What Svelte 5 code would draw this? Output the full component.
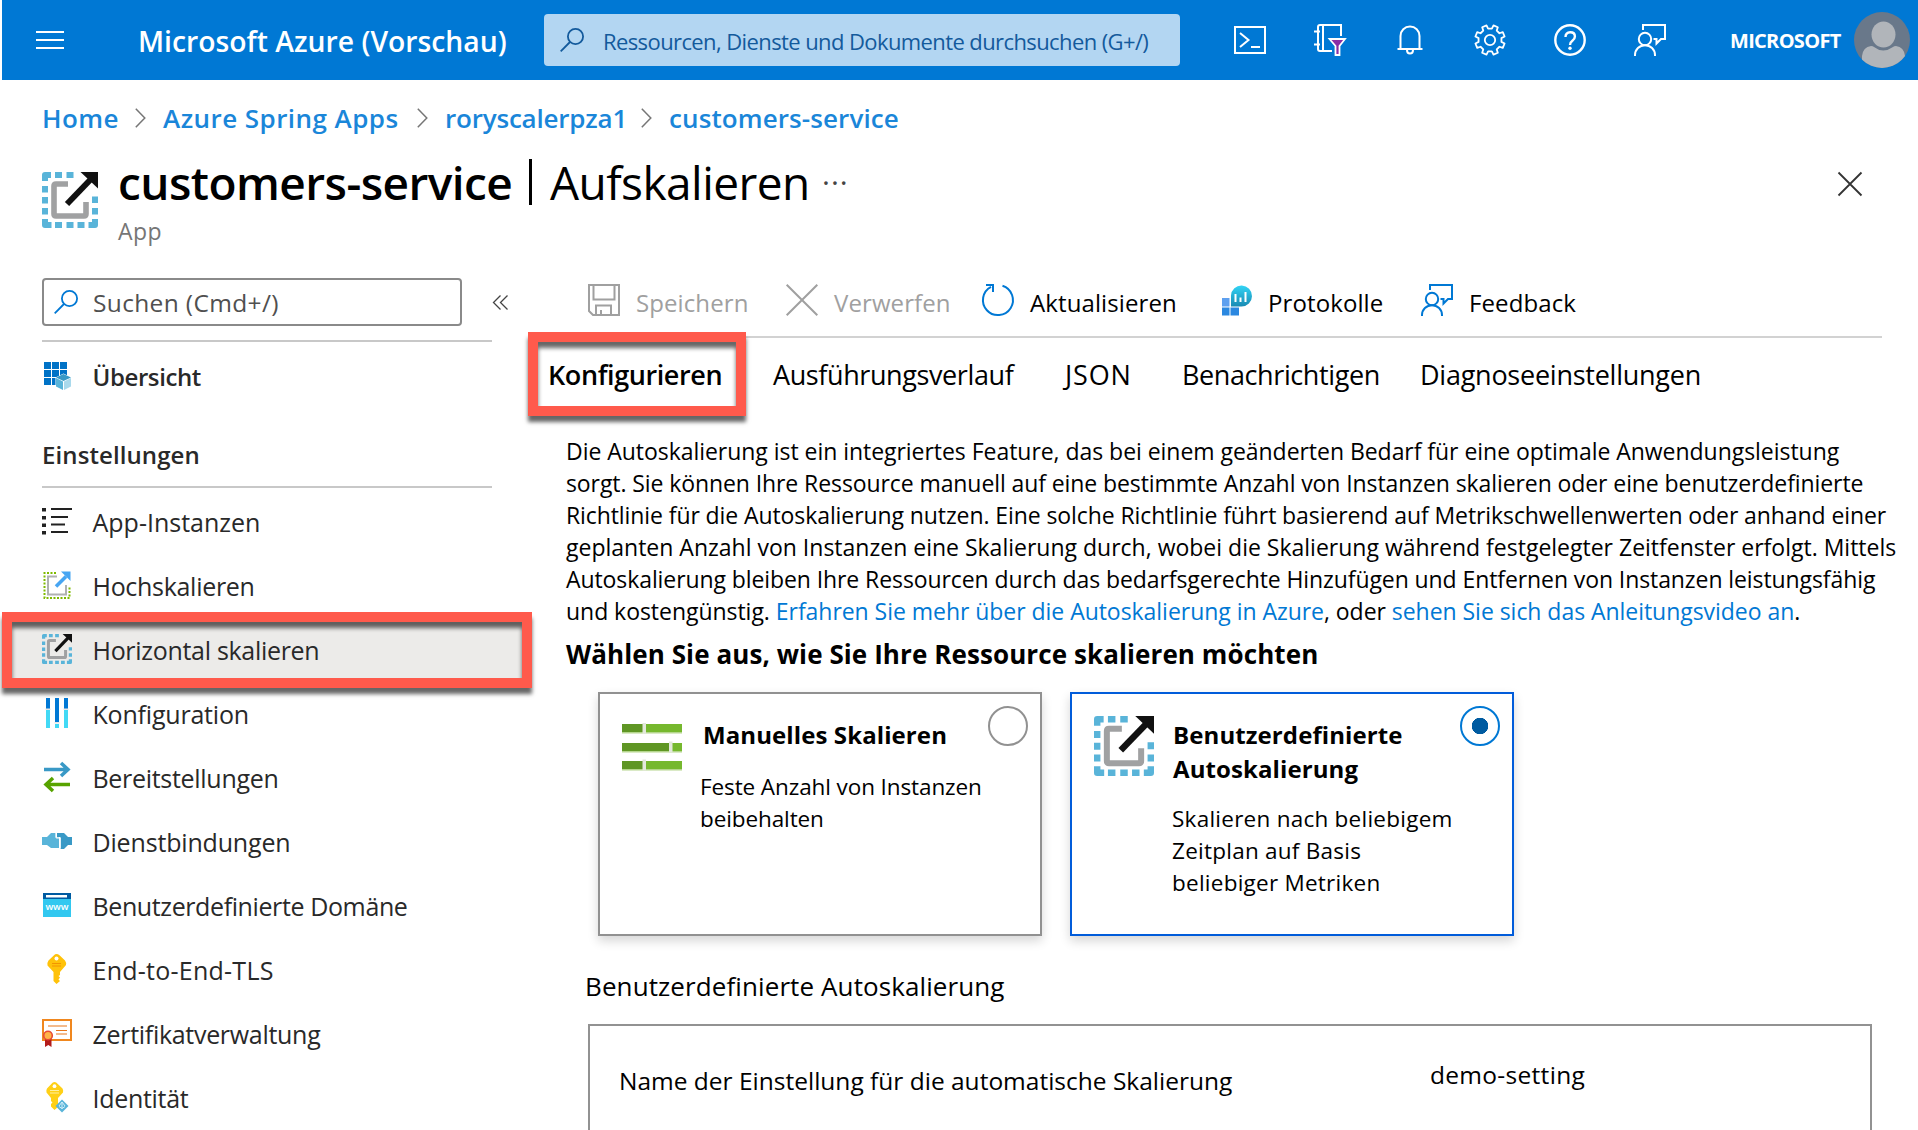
<script lang="ts">
    type NavItem = {
        icon: string;
        label: string;
        spacing?: number;
    };

    const navItems: NavItem[] = [
        { icon: "instances", label: "App-Instanzen", spacing: 0 },
        { icon: "scaleup", label: "Hochskalieren" },
        { icon: "scaleout", label: "Horizontal skalieren" },
        { icon: "config", label: "Konfiguration", spacing: -0.2 },
        { icon: "deploy", label: "Bereitstellungen" },
        { icon: "binding", label: "Dienstbindungen", spacing: -0.17 },
        { icon: "domain", label: "Benutzerdefinierte Domäne", spacing: -0.39 },
        { icon: "key", label: "End-to-End-TLS", spacing: 0.25 },
        { icon: "cert", label: "Zertifikatverwaltung" },
        { icon: "identity", label: "Identität" },
    ];

    const crumbs = [
        { label: "Home", spacing: 0.4 },
        { label: "Azure Spring Apps", spacing: 0.45 },
        { label: "roryscalerpza1", spacing: -0.2 },
        { label: "customers-service", spacing: 0.1 },
    ];

    const commands = [
        { icon: "save", label: "Speichern", disabled: true },
        { icon: "discard", label: "Verwerfen", disabled: true },
        { icon: "refresh", label: "Aktualisieren", disabled: false },
        { icon: "logs", label: "Protokolle", disabled: false },
        { icon: "feedback", label: "Feedback", disabled: false },
    ];

    const tabs = ["Konfigurieren", "Ausführungsverlauf", "JSON", "Benachrichtigen", "Diagnoseeinstellungen"];

    const topIcons = ["shell", "filter", "bell", "gear", "help", "feedback"];

    let selected = $state("scaleout");
    let activeTab = $state("Konfigurieren");
    let mode = $state("custom");

    function gearPath() {
        const pts: string[] = [];
        for (let k = 0; k < 8; k++) {
            const mid = 22.5 + 45 * k;
            for (const [da, r] of [[-13, 11.6], [-9, 15], [9, 15], [13, 11.6]]) {
                const a = ((mid + da) * Math.PI) / 180;
                pts.push(`${(16 + r * Math.cos(a)).toFixed(2)} ${(16 + r * Math.sin(a)).toFixed(2)}`);
            }
        }
        return `M${pts.join("L")}Z`;
    }
</script>

{#snippet icon(name: string)}
    {#if name === "shell"}
        <svg width="32" height="32" viewBox="0 0 32 32" fill="none" stroke="currentColor" stroke-width="2">
            <path d="M1 3h30v26H1zM6 9l8.500 7L6 23M17 23h9" />
        </svg>
    {:else if name === "filter"}
        <svg width="32" height="32" viewBox="0 0 32 32" fill="none" stroke="currentColor" stroke-width="2">
            <path d="M18 27H6q-2 0-2-2V3q0-2 2-2h21v11M9 1v26M0 7.500h6M0 20.500h6" />
            <path d="M15.500 15h15.500l-5.500 7v9h-4v-9z" fill="#8a2da5" stroke-width="1.800" />
        </svg>
    {:else if name === "bell"}
        <svg width="32" height="32" viewBox="0 0 32 32" fill="none" stroke="currentColor" stroke-width="2">
            <path d="M6.500 24V12a9.500 9.500 0 0 1 19 0v12M3.500 25h25M13 26q0 3.500 3 3.500t3-3.500" />
        </svg>
    {:else if name === "gear"}
        <svg width="32" height="32" viewBox="0 0 32 32" fill="none" stroke="currentColor" stroke-width="1.800">
            <path d={gearPath()} stroke-linejoin="round" />
            <circle cx="16" cy="16" r="5.200" />
        </svg>
    {:else if name === "help"}
        <svg width="32" height="32" viewBox="0 0 32 32" fill="none" stroke="currentColor" stroke-width="2.400">
            <circle cx="16" cy="16" r="14.700" />
            <path d="M11.500 13q0-4.700 4.700-4.700t4.700 4.200q0 2.500-2.500 4.300t-2.400 4.200" />
            <circle cx="16" cy="24.300" r="1.700" fill="currentColor" stroke="none" />
        </svg>
    {:else if name === "feedback"}
        <svg width="32" height="32" viewBox="0 0 32 32" fill="none" stroke="currentColor" stroke-width="2">
            <path d="M9 6V1h22v14h-4l-4.500 4.500V15h-3" />
            <circle cx="11" cy="15" r="6.200" />
            <path d="M1 32v-1a10 9.800 0 0 1 20 0v1" />
        </svg>
    {:else if name === "search"}
        <svg width="24" height="24" viewBox="0 0 24 24" fill="none" stroke="currentColor" stroke-width="1.800">
            <circle cx="15.500" cy="8.500" r="7.600" />
            <path d="M10 14L.700 23.300" />
        </svg>
    {:else if name === "save"}
        <svg width="32" height="32" viewBox="0 0 32 32" fill="none" stroke="currentColor" stroke-width="2">
            <path d="M1 1h30v30H5l-4-4zM5.500 1v14.500h21V1M8 31v-9.500h15V31M13 31v-5" />
        </svg>
    {:else if name === "discard"}
        <svg width="32" height="32" viewBox="0 0 32 32" fill="none" stroke="currentColor" stroke-width="2">
            <path d="M.700.700l30.600 30.600M31.300.700L.700 31.300" />
        </svg>
    {:else if name === "refresh"}
        <svg width="32" height="32" viewBox="0 0 32 32" fill="none" stroke="currentColor" stroke-width="2">
            <path d="M20.500 1.800A15 15 0 1 1 9 2.800M4 1h7v7" />
        </svg>
    {:else if name === "logs"}
        <svg width="32" height="32" viewBox="0 0 32 32">
            <defs>
                <linearGradient id="pin" x1="0" y1="0" x2="0" y2="1"><stop stop-color="#32d4f5" /><stop offset="1" stop-color="#198ab3" /></linearGradient>
            </defs>
            <path d="M2 14h7.500v8.500H2z" fill="#5ea0ef" />
            <path d="M2 23.500h7.500v8H2zM10.500 23.500h8.500v8h-8.500z" fill="#2b88e0" />
            <path d="M11 22.500V11.500a10.500 10.500 0 1 1 10.500 11z" fill="url(#pin)" />
            <path d="M14.500 10h2v8h-2zM19.500 13.500h2V18h-2zM24.500 8h2v10h-2z" fill="#fff" />
        </svg>
    {:else if name === "overview"}
        <svg width="30" height="30" viewBox="0 0 30 30">
            {#each [0, 1, 2] as r}
                {#each [0, 1, 2] as c}
                    <rect x={2 + c * 8} y={2 + r * 8} width="7" height="7" fill="#0072c6" />
                {/each}
            {/each}
            <path d="M13.500 17.500l8-4 8 4v9l-8 4-8-4z" fill="#fff" />
            <path d="M14 17.500l7.500-3.500 7.500 3.500-7.500 3.500z" fill="#3999c6" />
            <path d="M14 18l7 3.500V30l-7-3.500z" fill="#59b4d9" />
            <path d="M29 18l-7 3.500V30l7-3.500z" fill="#a9d9ec" />
        </svg>
    {:else if name === "instances"}
        <svg width="30" height="30" viewBox="0 0 30 30" fill="#222">
            <path d="M0 2h4v3.500H0zM0 10h4v3.500H0zM0 17.500h4V21H0zM0 25h4v3.500H0z" />
            <path d="M9 2h21v2H9zM9 10h17v2H9zM9 17.500h14v2H9zM9 25h17v2H9z" />
        </svg>
    {:else if name === "scaleup"}
        <svg width="30" height="30" viewBox="0 0 30 30" fill="none">
            <path d="M14 3H2.500v25h25V16" stroke="#7fba00" stroke-width="2" stroke-dasharray="2 1.500" />
            <path d="M15 6.500H6v18h18V15" stroke="#b0b1b2" stroke-width="2" />
            <path d="M14 16.500L24 6.500" stroke="#47a5f2" stroke-width="3.500" />
            <path d="M19 1.500h9.500V11z" fill="#47a5f2" />
        </svg>
    {:else if name === "scaleout"}
        <svg class="scaleout" viewBox="0 0 56 56" fill="none">
            <g fill="#59b4d9">
                <path d="M9 0H3Q0 0 0 3v6h6V6h3zM0 47v6q0 3 3 3h6.500v-6H6v-3zM46.500 56H53q3 0 3-3v-6h-6v3h-3.500z" />
                <path d="M13 0h7v6h-7zM24.500 0h7v6h-7zM0 14h6v6.500H0zM0 25h6v6.500H0zM0 36h6v6.500H0z" />
                <path d="M13 50h7v6h-7zM24.500 50h7v6h-7zM35.500 50h7v6h-7zM50 24.500h6V31h-6zM50 36h6v6.500h-6z" />
            </g>
            <path d="M26 12H14q-2 0-2 2v28q0 2 2 2h28q2 0 2-2V30" stroke="#a0a1a2" stroke-width="5.600" />
            <path d="M25 32L50 6" stroke="#111" stroke-width="6" />
            <path d="M38.500 0H56v16.500z" fill="#111" />
        </svg>
    {:else if name === "config"}
        <svg width="30" height="30" viewBox="0 0 30 30">
            <path d="M4 0h4v12H4zM13 0h4v25h-4zM22 0h4v12h-4z" fill="#0078d4" />
            <path d="M4 12h4v18H4zM13 26h4v4h-4zM22 12h4v18h-4z" fill="#42d9f5" />
            <path d="M3.500 10.500h5v1.500h-5zM12.500 24h5v1.500h-5zM21.500 10.500h5v1.500h-5z" fill="#e6e6e6" />
        </svg>
    {:else if name === "deploy"}
        <svg width="30" height="30" viewBox="0 0 30 30" fill="none" stroke-width="3.500">
            <path d="M2 7.500h24M19 1l7 6.500-7 6.500" stroke="#3999c6" />
            <path d="M28 22.500H4M11 16l-7 6.500 7 6.500" stroke="#57a300" />
        </svg>
    {:else if name === "binding"}
        <svg width="30" height="30" viewBox="0 0 30 30">
            <path d="M0 11h5l4-4h4.500v4.500H17V22H9l-4-3H0z" fill="#59b4d9" />
            <path d="M30 11h-4l-4-4h-7v4h3.500V23H22l4-4h4z" fill="#3999c6" />
            <path d="M14.200 7v5h4v10.500" fill="none" stroke="#fff" stroke-width="1" />
        </svg>
    {:else if name === "domain"}
        <svg width="30" height="30" viewBox="0 0 30 30">
            <path d="M1 3h28v24H1z" fill="#32c8f0" />
            <path d="M1 3h28v6H1z" fill="#005ba1" />
            <path d="M4 5h21v2.500H4z" fill="#fff" />
            <text x="15" y="20" text-anchor="middle" class="www">www</text>
        </svg>
    {:else if name === "key"}
        <svg width="30" height="30" viewBox="0 0 30 30">
            <path d="M14.500 0q1.500 0 3 1.200l5.500 5.300q1.500 2 1 4.500l-6 7v3l-1.500 1 1.500 1.500-1.500 2 1.500 1.500-3.500 3-3-3V18l-6-6.500q-.500-3 1-5l5.500-5.300Q13 0 14.500 0z" fill="#ffc20a" />
            <path d="M10 9.500h9M10 12h9" stroke="#f29400" />
            <circle cx="14.500" cy="4.500" r="2" fill="#fff" />
        </svg>
    {:else if name === "cert"}
        <svg width="30" height="30" viewBox="0 0 30 30" fill="none">
            <path d="M1 2h28v20H1z" stroke="#f0871e" stroke-width="2" fill="#fff" />
            <path d="M6 8h19M14 12.500h11M14 16h11" stroke="#e8761a" stroke-width="1.200" />
            <path d="M3 20h6.500v9l-3.200-2L3 29z" fill="#b31b1b" />
            <circle cx="6" cy="17.500" r="4.300" fill="#ffb347" stroke="#e84a34" stroke-width="1.600" />
        </svg>
    {:else if name === "identity"}
        <svg width="30" height="30" viewBox="0 0 30 30">
            <path d="M12.500 0q1 0 2 .800l6 5.700q1 1.500.500 4L16 16v9l-3.500 3-3.500-3.500v-2.500l1.500-1.500L9 19v-3L4.500 10.500q-.500-2.500.500-4L10.500.800Q11.500 0 12.500 0z" fill="#ffd016" />
            <path d="M8 8.500h9M8 11h9" stroke="#fff0a0" />
            <circle cx="12.500" cy="4.200" r="1.900" fill="#fff" />
            <path d="M20 17.500l6.500 6.500-6.500 6.500-6.500-6.500z" fill="#59b4d9" />
            <path d="M20 20v7M17 24.500l3 2 3-2M20 20l-3 4M20 20l3 4" stroke="#d5eef8" fill="none" />
        </svg>
    {/if}
{/snippet}

<div class="page">
    <header>
        <svg class="burger" width="28" height="18" viewBox="0 0 28 18">
            <path d="M0 1h28M0 9h28M0 17h28" stroke="#fff" stroke-width="2" />
        </svg>
        <span class="brand">Microsoft Azure (Vorschau)</span>
        <div class="topsearch">
            {@render icon("search")}
            <span>Ressourcen, Dienste und Dokumente durchsuchen (G+/)</span>
        </div>
        <div class="topicons">
            {#each topIcons as name}
                {@render icon(name)}
            {/each}
        </div>
        <span class="tenant">MICROSOFT</span>
        <svg class="avatar" width="56" height="56" viewBox="0 0 56 56">
            <defs>
                <clipPath id="round"><circle cx="28" cy="28" r="28" /></clipPath>
            </defs>
            <g clip-path="url(#round)">
                <path d="M0 0h56v56H0z" fill="#69788a" />
                <ellipse cx="29.500" cy="22.500" rx="12" ry="13" fill="#b1b5ba" />
                <path d="M8 56V44q1-9 9-10 2 0 3 1 9 7 19 0 1-1 3-1 8 1 9 10v12z" fill="#b1b5ba" />
            </g>
        </svg>
    </header>

    <nav class="crumbs">
        {#each crumbs as crumb, i}
            {#if i > 0}
                <svg width="11" height="20" viewBox="0 0 11 20" fill="none" stroke="#767676" stroke-width="1.500">
                    <path d="M.800.800L9.800 10l-9 9.200" />
                </svg>
            {/if}
            <a href="#{crumb.label}" style:letter-spacing="{crumb.spacing}px">{crumb.label}</a>
        {/each}
    </nav>

    <div class="titlebar">
        <div class="titleicon">{@render icon("scaleout")}</div>
        <div class="titletext">
            <h1><b>customers-service</b><i></i><span>Aufskalieren</span><em>···</em></h1>
            <p>App</p>
        </div>
        <svg class="close" width="24" height="24" viewBox="0 0 24 24" stroke="#333" stroke-width="1.800">
            <path d="M.500.500l23 23M23.500.500l-23 23" />
        </svg>
    </div>

    <div class="body">
        <aside>
            <div class="searchrow">
                <div class="search">
                    {@render icon("search")}
                    <span>Suchen (Cmd+/)</span>
                </div>
                <svg width="15" height="15" viewBox="0 0 15 15" fill="none" stroke="#444" stroke-width="1.300">
                    <path d="M7.500.500l-7 7 7 7M14.500.500l-7 7 7 7" />
                </svg>
            </div>
            <hr />
            <div class="item overview">
                <div class="itemicon">{@render icon("overview")}</div>
                <span>Übersicht</span>
            </div>
            <h2>Einstellungen</h2>
            <hr />
            <div class="list">
                {#each navItems as item}
                    <div class="item" class:selected={selected === item.icon}>
                        <div class="itemicon">{@render icon(item.icon)}</div>
                        <span style:letter-spacing="{item.spacing ?? -0.3}px">{item.label}</span>
                        {#if selected === item.icon}
                            <div class="callout"></div>
                        {/if}
                    </div>
                {/each}
            </div>
        </aside>

        <main>
            <div class="toolbar">
                {#each commands as cmd}
                    <div class="cmd" class:disabled={cmd.disabled}>
                        <div class="cmdicon">{@render icon(cmd.icon)}</div>
                        <span>{cmd.label}</span>
                    </div>
                {/each}
            </div>

            <div class="tabs">
                {#each tabs as tab}
                    <div class="tab" class:active={activeTab === tab} class:caps={tab === "JSON"}>
                        <span>{tab}</span>
                        {#if activeTab === tab}
                            <div class="callout"></div>
                        {/if}
                    </div>
                {/each}
            </div>

            <p class="intro">
                <span>Die Autoskalierung ist ein integriertes Feature, das bei einem geänderten Bedarf für eine optimale Anwendungsleistung</span>
                <span class="tight">sorgt. Sie können Ihre Ressource manuell auf eine bestimmte Anzahl von Instanzen skalieren oder eine benutzerdefinierte</span>
                <span class="tight">Richtlinie für die Autoskalierung nutzen. Eine solche Richtlinie führt basierend auf Metrikschwellenwerten oder anhand einer</span>
                <span class="loose">geplanten Anzahl von Instanzen eine Skalierung durch, wobei die Skalierung während festgelegter Zeitfenster erfolgt. Mittels</span>
                <span class="tight">Autoskalierung bleiben Ihre Ressourcen durch das bedarfsgerechte Hinzufügen und Entfernen von Instanzen leistungsfähig</span>
                <span>und kostengünstig. <a href="#mehr">Erfahren Sie mehr über die Autoskalierung in Azure</a>, oder <a href="#video">sehen Sie sich das Anleitungsvideo an</a>.</span>
            </p>

            <h3>Wählen Sie aus, wie Sie Ihre Ressource skalieren möchten</h3>

            <div class="cards">
                <div class="card" class:checked={mode === "manual"}>
                    <svg class="cardicon" width="60" height="60" viewBox="0 0 60 60">
                        <path d="M0 8h60v9H0zM0 27h60v9H0zM0 45h60v9H0z" fill="#76b82e" />
                        <path d="M0 8h22v9H0zM0 27h48v9H0zM0 45h22v9H0z" fill="#5f9624" />
                        <path d="M0 16h60v1.500H0zM0 35h60v1.500H0zM0 53h60v1.500H0z" fill="#b5d68d" />
                        <path d="M20.500 7h3.500v11h-3.500zM47 25.500h3.500v11H47zM20.500 43.500h3.500v11h-3.500z" fill="#e3e8dc" />
                    </svg>
                    <div class="cardtext manual">
                        <h4>Manuelles Skalieren</h4>
                        <p>Feste Anzahl von Instanzen<br />beibehalten</p>
                    </div>
                    <div class="radio"></div>
                </div>
                <div class="card" class:checked={mode === "custom"}>
                    <div class="cardicon">{@render icon("scaleout")}</div>
                    <div class="cardtext">
                        <h4>Benutzerdefinierte<br />Autoskalierung</h4>
                        <p>Skalieren nach beliebigem<br />Zeitplan auf Basis<br />beliebiger Metriken</p>
                    </div>
                    <div class="radio"></div>
                </div>
            </div>

            <h5>Benutzerdefinierte Autoskalierung</h5>
            <div class="settings">
                <span class="name">Name der Einstellung für die automatische Skalierung</span>
                <span class="value">demo-setting</span>
            </div>
        </main>
    </div>
</div>

<style>
    :global(body) {
        overflow: hidden;
        background: #fff;
    }

    .page {
        width: 1918px;
        height: 1130px;
        overflow: hidden;
        font-family: "Open Sans", "Noto Sans", sans-serif;
        color: #000;
        white-space: nowrap;
    }

    svg {
        display: block;
        flex: none;
        overflow: visible;
    }

    h1, h2, h3, h4, h5, p, hr {
        margin: 0;
        font-weight: 400;
    }

    a {
        color: #0078d4;
        text-decoration: none;
    }

    header {
        height: 80px;
        margin-left: 2px;
        background: #0078d4;
        color: #fff;
        display: flex;
        align-items: center;
    }

    .burger {
        margin-left: 34px;
    }

    .brand {
        width: 405px;
        padding: 1px 0 0 74px;
        box-sizing: border-box;
        margin-right: 75px;
        flex: none;
        font-size: 28.3px;
        font-weight: 600;
    }

    .topsearch {
        width: 636px;
        height: 52px;
        flex: none;
        box-sizing: border-box;
        padding-left: 16px;
        border-radius: 4px;
        background: #b3d6f2;
        color: #135a9c;
        display: flex;
        align-items: center;
        gap: 19px;
        font-size: 22px;
        letter-spacing: -0.6px;
    }

    .topsearch span {
        padding-top: 2px;
    }

    .topicons {
        margin-left: 54px;
        display: flex;
        gap: 48px;
    }

    .tenant {
        width: 124px;
        margin-left: 64px;
        font-size: 20px;
        font-weight: 700;
        letter-spacing: -0.7px;
    }

    .crumbs {
        height: 72px;
        padding: 3px 0 0 42px;
        box-sizing: border-box;
        display: grid;
        grid-template-columns: 93px 28px 254px 28px 196px 28px auto;
        align-items: center;
        font-size: 26px;
        font-weight: 600;
    }

    .crumbs a {
        color: #1a86d9;
    }

    .titlebar {
        height: 98px;
        padding-left: 42px;
        display: flex;
        align-items: flex-start;
    }

    .titleicon {
        width: 56px;
        height: 56px;
        margin-top: 20px;
    }

    .scaleout {
        width: 100%;
        height: 100%;
    }

    .titletext {
        flex: 1;
        padding-left: 20px;
    }

    h1 {
        height: 60px;
        line-height: 60px;
        font-size: 46px;
        letter-spacing: -0.55px;
        display: flex;
        align-items: center;
    }

    h1 b {
        width: 411px;
        font-weight: 600;
    }

    h1 i {
        width: 3px;
        height: 46px;
        margin-right: 18px;
        background: #000;
    }

    h1 span {
        width: 272px;
    }

    h1 em {
        font-size: 30px;
        font-style: normal;
        letter-spacing: 1px;
        color: #444;
    }

    .titletext p {
        line-height: 38px;
        font-size: 23px;
        letter-spacing: 0.5px;
        color: #767676;
    }

    .close {
        margin: 20px 56px 0 0;
    }

    .body {
        display: flex;
    }

    aside {
        width: 492px;
        flex: none;
        padding: 28px 74px 0 0;
    }

    .searchrow {
        display: flex;
        align-items: center;
        gap: 31px;
        padding-left: 42px;
        margin-bottom: 14px;
    }

    .search {
        width: 420px;
        height: 48px;
        flex: none;
        box-sizing: border-box;
        padding-left: 10px;
        border: 2px solid #8a8a8a;
        border-radius: 4px;
        display: flex;
        align-items: center;
        gap: 15px;
        font-size: 24.5px;
        letter-spacing: 0.35px;
        color: #505050;
    }

    .search :global(svg) {
        color: #0078d4;
    }

    hr {
        height: 2px;
        margin-left: 42px;
        border: 0;
        background: #c8c8c8;
    }

    .item {
        position: relative;
        height: 64px;
        padding-left: 42px;
        display: flex;
        align-items: center;
        gap: 20.5px;
        font-size: 25px;
        color: #292929;
    }

    .itemicon {
        width: 30px;
        height: 30px;
        margin-top: -2px;
    }

    .overview {
        margin-top: 2px;
        font-size: 24px;
        font-weight: 600;
        letter-spacing: -0.4px;
    }

    h2 {
        height: 78px;
        padding: 15px 0 0 42px;
        box-sizing: border-box;
        line-height: 64px;
        font-size: 24px;
        font-weight: 600;
        letter-spacing: 0.1px;
        color: #292929;
    }

    .list {
        margin-top: 2px;
    }

    .selected::before {
        content: "";
        position: absolute;
        left: 10px;
        top: 2px;
        width: 514px;
        height: 60px;
        background: #ecebe9;
        z-index: -1;
    }

    .callout {
        position: absolute;
        box-sizing: border-box;
        border: 10px solid #ff5a4c;
        box-shadow: 0 6px 4px rgba(0, 0, 0, 0.6), inset 0 6px 4px rgba(0, 0, 0, 0.6);
    }

    .item .callout {
        left: 2px;
        top: -6px;
        width: 530px;
        height: 76px;
    }

    .www {
        font: 600 9.5px "Open Sans", sans-serif;
        fill: #fff;
    }

    main {
        flex: none;
        width: 1352px;
    }

    .toolbar {
        height: 86px;
        border-bottom: 2px solid #d2d2d2;
        padding-left: 22px;
        width: 1294px;
        display: grid;
        grid-template-columns: 198px 196px 238px 201px auto;
        align-items: center;
        font-size: 24px;
        letter-spacing: 0.1px;
    }

    .cmd {
        display: flex;
        align-items: center;
        gap: 16px;
        padding-top: 16px;
    }

    .cmd span {
        padding-top: 3px;
    }

    .cmdicon {
        margin-top: -2px;
        color: #0078d4;
    }

    .disabled,
    .disabled .cmdicon {
        color: #a0a0a0;
    }

    .tabs {
        height: 73px;
        margin-left: -18px;
        display: grid;
        grid-template-columns: 225px 292px 117px 238px auto;
        align-items: center;
        font-size: 27px;
        letter-spacing: -0.4px;
    }

    .tab {
        position: relative;
    }

    .tab:last-child {
        letter-spacing: -0.25px;
    }

    .caps {
        letter-spacing: 0.8px;
    }

    .active {
        font-weight: 600;
    }

    .tab .callout {
        left: -20px;
        top: -24px;
        width: 218px;
        height: 84px;
    }

    .intro {
        margin-top: 24px;
        line-height: 32px;
        font-size: 23px;
        letter-spacing: -0.04px;
    }

    .intro span {
        display: block;
    }

    .intro .tight {
        letter-spacing: -0.09px;
    }

    .intro .loose {
        letter-spacing: 0;
    }

    h3 {
        line-height: 54px;
        font-size: 26px;
        font-weight: 700;
        letter-spacing: 0.09px;
    }

    .cards {
        margin: 11px 0 0 32px;
        display: flex;
        gap: 28px;
    }

    .card {
        position: relative;
        width: 444px;
        height: 244px;
        box-sizing: border-box;
        padding: 22px;
        border: 2px solid #919191;
        box-shadow: 0 5px 10px rgba(0, 0, 0, 0.16);
        display: flex;
    }

    .checked {
        border-color: #015cda;
    }

    .cardicon {
        width: 60px;
        height: 60px;
        flex: none;
    }

    .cardtext {
        padding-left: 19px;
    }

    h4 {
        margin-top: 2px;
        line-height: 34px;
        font-size: 24px;
        font-weight: 700;
        letter-spacing: 0.1px;
    }

    .cardtext p {
        margin: 17px 0 0 -1px;
        line-height: 32px;
        font-size: 22.5px;
        letter-spacing: 0.25px;
    }

    .manual h4 {
        margin-left: 2px;
    }

    .manual p {
        margin: 19px 0 0 -1px;
        letter-spacing: -0.1px;
    }

    .radio {
        position: absolute;
        right: 12px;
        top: 12px;
        width: 40px;
        height: 40px;
        box-sizing: border-box;
        border: 2px solid #919191;
        border-radius: 50%;
    }

    .checked .radio {
        border-color: #0078d4;
        background: radial-gradient(circle, #005ba1 8px, transparent 8.5px);
    }

    h5 {
        height: 88px;
        margin-left: 19px;
        padding-top: 11px;
        box-sizing: border-box;
        line-height: 78px;
        font-size: 26px;
        letter-spacing: 0.1px;
    }

    .settings {
        width: 1284px;
        height: 200px;
        margin-left: 22px;
        box-sizing: border-box;
        padding: 36px 0 0 29px;
        border: 2px solid #929292;
        display: grid;
        grid-template-columns: 811px auto;
        align-items: start;
        font-size: 24.5px;
        line-height: 38px;
    }

    .value {
        margin-top: -6px;
        letter-spacing: 0.3px;
    }
</style>
